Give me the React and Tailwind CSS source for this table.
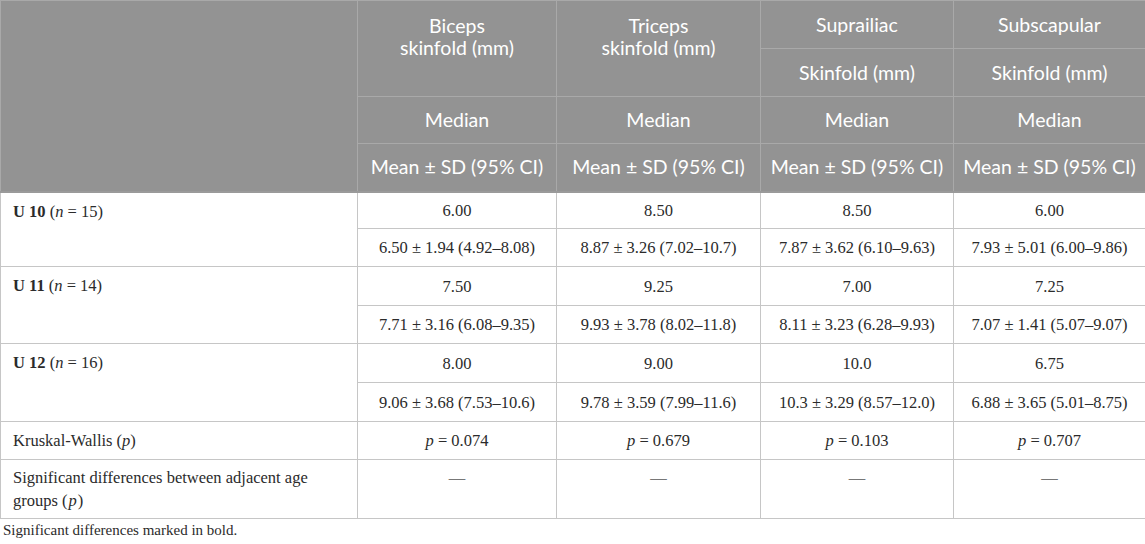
import React from "react";

const serif = { fontFamily: '"Liberation Serif", "Times New Roman", serif' };

const groups = [
  { label: "U 10", n: "15", median: ["6.00", "8.50", "8.50", "6.00"], mean: ["6.50 ± 1.94 (4.92–8.08)", "8.87 ± 3.26 (7.02–10.7)", "7.87 ± 3.62 (6.10–9.63)", "7.93 ± 5.01 (6.00–9.86)"], h: ["h-[37px]", "h-[38px]"] },
  { label: "U 11", n: "14", median: ["7.50", "9.25", "7.00", "7.25"], mean: ["7.71 ± 3.16 (6.08–9.35)", "9.93 ± 3.78 (8.02–11.8)", "8.11 ± 3.23 (6.28–9.93)", "7.07 ± 1.41 (5.07–9.07)"], h: ["h-[39px]", "h-[38px]"] },
  { label: "U 12", n: "16", median: ["8.00", "9.00", "10.0", "6.75"], mean: ["9.06 ± 3.68 (7.53–10.6)", "9.78 ± 3.59 (7.99–11.6)", "10.3 ± 3.29 (8.57–12.0)", "6.88 ± 3.65 (5.01–8.75)"], h: ["h-[39px]", "h-[39px]"] },
];

const kw = ["0.074", "0.679", "0.103", "0.707"];

const th = "border border-[#a9a9a9] px-1 text-center font-normal text-white align-middle whitespace-nowrap";
const td = "border border-[#c6c6c6] px-2 text-center align-middle";

export default function App() {
  return (
    <div className="w-[1145px] h-[544px] bg-white overflow-hidden">
      <table className="w-[1145px] table-fixed border-collapse text-[16.5px] text-[#2b2b2b]" style={serif}>
        <colgroup>
          <col className="w-[357px]" />
          <col className="w-[199px]" />
          <col className="w-[204px]" />
          <col className="w-[193px]" />
          <col className="w-[192px]" />
        </colgroup>
        <thead className="bg-[#939393] text-[19.5px] leading-[22px]" style={{ fontFamily: 'Lato, "Open Sans", sans-serif' }}>
          <tr className="h-[48px]">
            <th rowSpan={4} className={th}></th>
            <th rowSpan={2} className={`${th} align-top pt-[14px]`}>Biceps<br />skinfold (mm)</th>
            <th rowSpan={2} className={`${th} align-top pt-[14px]`}>Triceps<br />skinfold (mm)</th>
            <th className={th}>Suprailiac</th>
            <th className={th}>Subscapular</th>
          </tr>
          <tr className="h-[48px]">
            <th className={th}>Skinfold (mm)</th>
            <th className={th}>Skinfold (mm)</th>
          </tr>
          <tr className="h-[47px]">
            {[0, 1, 2, 3].map((i) => (
              <th key={i} className={th}>Median</th>
            ))}
          </tr>
          <tr className="h-[48px]">
            {[0, 1, 2, 3].map((i) => (
              <th key={i} className={th}>Mean ± SD (95% CI)</th>
            ))}
          </tr>
        </thead>
        <tbody className="leading-[23px] border-t-2 border-[#9a9a9a]">
          {groups.map((g) => (
            <React.Fragment key={g.label}>
              <tr className={g.h[0]}>
                <td rowSpan={2} className="border border-[#c6c6c6] px-3 pt-[7px] align-top text-left">
                  <b>{g.label}</b> (<i>n</i> = {g.n})
                </td>
                {g.median.map((v, i) => (
                  <td key={i} className={td}>{v}</td>
                ))}
              </tr>
              <tr className={g.h[1]}>
                {g.mean.map((v, i) => (
                  <td key={i} className={td}>{v}</td>
                ))}
              </tr>
            </React.Fragment>
          ))}
          <tr className="h-[38px]">
            <td className="border border-[#c6c6c6] px-3 text-left align-middle">
              Kruskal-Wallis (<i>p</i>)
            </td>
            {kw.map((v, i) => (
              <td key={i} className={td}><i>p</i> = {v}</td>
            ))}
          </tr>
          <tr className="h-[59px]">
            <td className="border border-[#c6c6c6] pl-3 pr-10 pt-[6px] pb-[6px] text-left align-top">
              Significant differences between adjacent age groups (<i className="px-[1px]">p</i>)
            </td>
            {[0, 1, 2, 3].map((i) => (
              <td key={i} className="border border-[#c6c6c6] px-2 pt-[6px] text-center align-top text-[#777]">—</td>
            ))}
          </tr>
        </tbody>
      </table>
      <p className="mt-[1px] pl-[3px] text-[15px] leading-[20px] text-[#2b2b2b]" style={serif}>
        Significant differences marked in bold.
      </p>
    </div>
  );
}
